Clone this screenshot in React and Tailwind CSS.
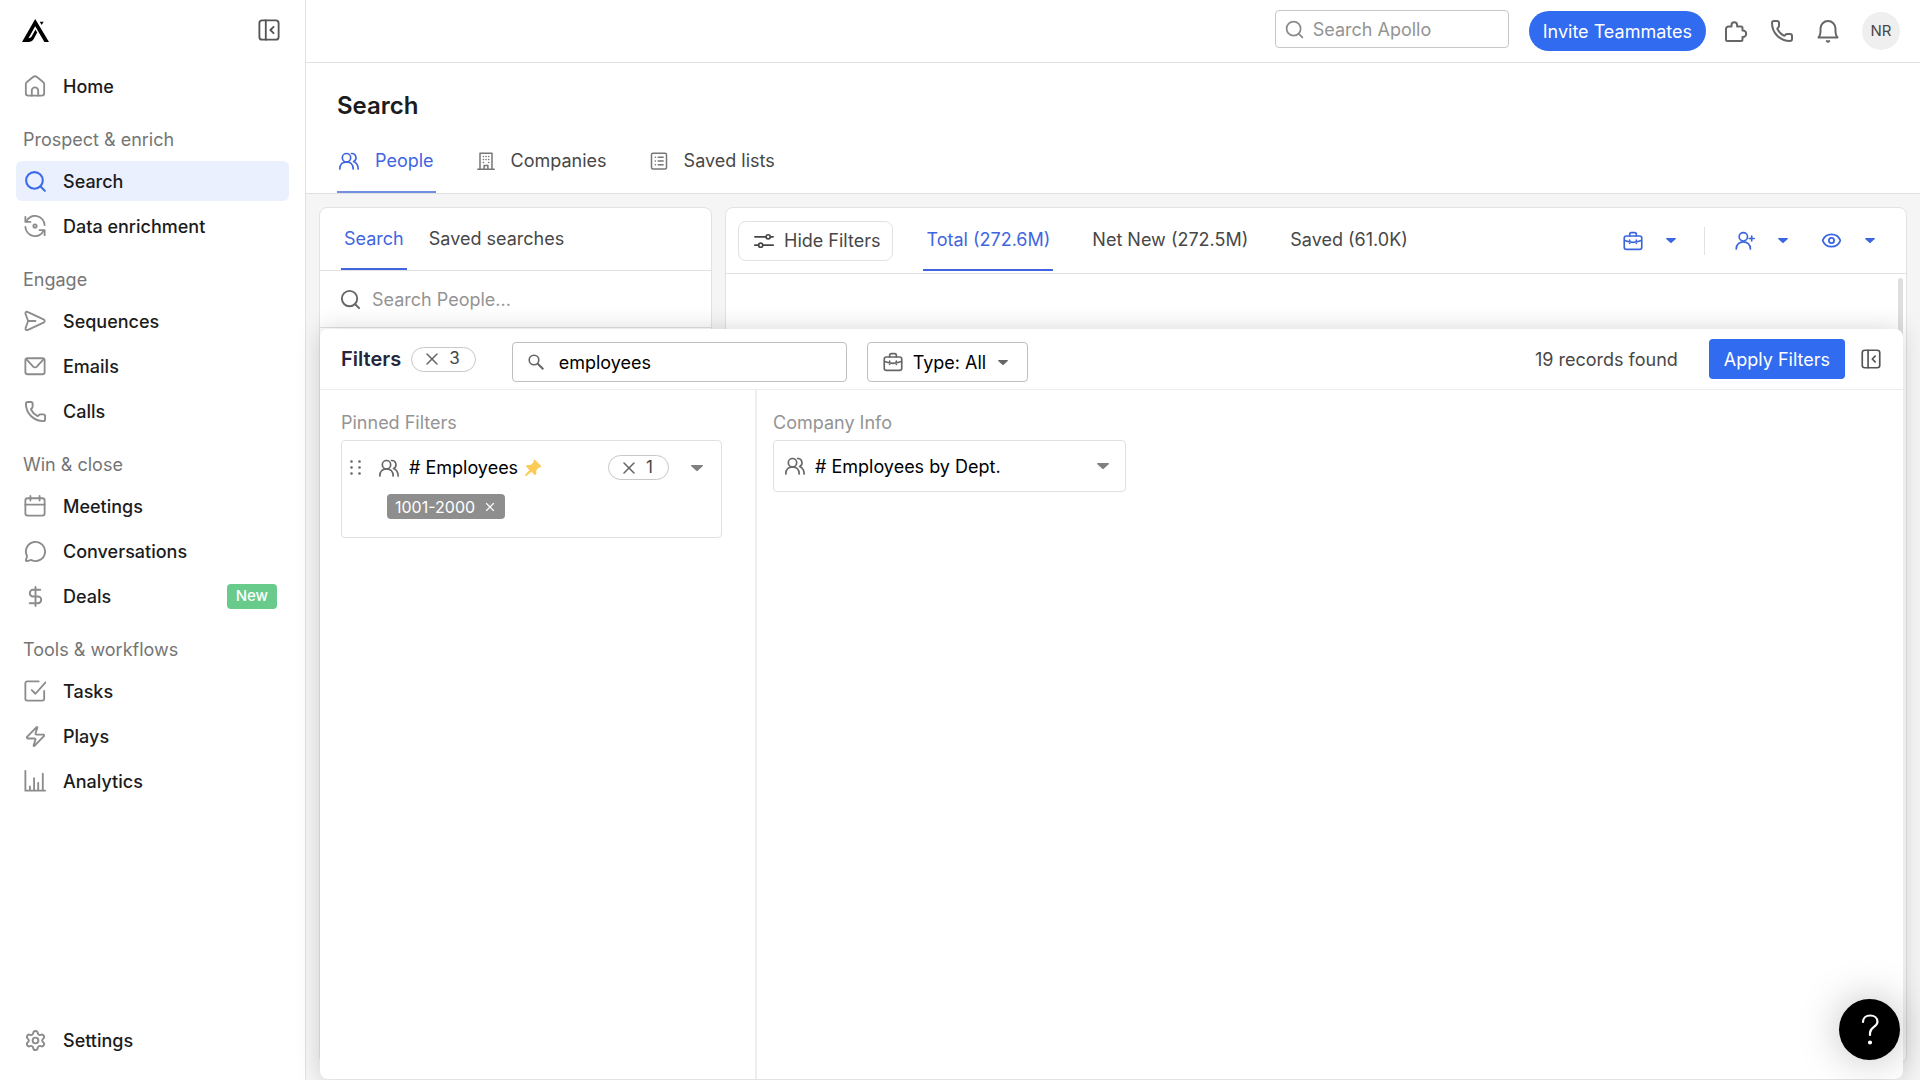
import React from "react";
import { Search, Phone, MessageCircle, DollarSign, Zap, Settings, Eye, X } from "lucide-react";

function Svg({ size = 22, sw = 2, className = "", children }) {
  return (
    <svg width={size} height={size} viewBox="0 0 24 24" fill="none" stroke="currentColor" strokeWidth={sw}
      strokeLinecap="round" strokeLinejoin="round" className={"shrink-0 " + className} aria-hidden="true">
      {children}
    </svg>
  );
}

const HomeIcon = () => (
  <Svg>
    <path d="M2 10c0-1 .4-1.800 1.200-2.400l7-5.600a3 3 0 0 1 3.600 0l7 5.600c.8.600 1.200 1.400 1.200 2.400v10a2.500 2.500 0 0 1-2.500 2.500h-15A2.500 2.500 0 0 1 2 20Z" />
    <path d="M8.500 22.500V17a3.500 3.500 0 0 1 7 0v5.500" />
  </Svg>
);
const EnrichIcon = () => (
  <Svg>
    <path d="M1.500 2v5.500H7" />
    <path d="M2.500 7A10.500 10.500 0 0 1 22.500 11" />
    <path d="M22.500 22v-5.500H17" />
    <path d="M21.500 17A10.500 10.500 0 0 1 1.500 13" />
    <circle cx="12" cy="12" r="1.800" />
  </Svg>
);
const SendIcon = () => (
  <Svg>
    <path d="M1.500 3.800c0-1.800 1.200-2.300 2.800-1.500l17 7.900c1.700.8 1.700 2.800 0 3.600l-17 7.900c-1.600.8-3.100-.3-2.600-1.900L4.500 12Z" />
    <path d="M4.500 12h8" />
  </Svg>
);
const CalendarIcon = () => (
  <Svg>
    <rect x="1.500" y="3.500" width="21" height="19" rx="2.500" />
    <path d="M1.500 10.500h21M7 1v5M17 1v5" />
  </Svg>
);
const MailIcon = () => (
  <Svg>
    <rect x="1.500" y="3.500" width="21" height="17.500" rx="2.500" />
    <path d="m2.500 4.500 7.500 8.200a2.700 2.700 0 0 0 4 0l7.500-8.200" />
  </Svg>
);
const TaskIcon = () => (
  <Svg>
    <path d="M22 12v8.500a2 2 0 0 1-2 2H3.500a2 2 0 0 1-2-2V3.500a2 2 0 0 1 2-2H16" />
    <path d="m8.500 11 4 4L23.500 2.500" />
  </Svg>
);
const ChartIcon = () => (
  <Svg>
    <path d="M1.500 1v21.500h21.500M6.500 18v4M11 9v13M15.500 14v8M20.500 4v18" />
  </Svg>
);
const PanelIcon = ({ size = 22 }) => (
  <Svg size={size}>
    <rect x="1.500" y="1.500" width="21" height="21" rx="3" />
    <path d="M8.500 1.500v21M17 8.500 13.500 12l3.500 3.500" />
  </Svg>
);
const PeopleIcon = ({ size = 20, className }) => (
  <Svg size={size} className={className}>
    <circle cx="9" cy="8" r="5" />
    <path d="M1 21.500c0-5.500 3.500-8.500 8-8.500s8 3 8 8.500" />
    <path d="M15 3a5 5 0 0 1 2.500 9.500c3.500 1.500 5.500 4.500 5.500 9" />
  </Svg>
);
const UserPlusIcon = () => (
  <Svg size={20}>
    <circle cx="10" cy="7" r="5" />
    <path d="M1.500 21.500c0-5.500 4-8.500 8.500-8.500s8.500 3 8.500 8.500M20 6v6M17 9h6" />
  </Svg>
);
const BuildingIcon = () => (
  <Svg size={18}>
    <path d="M1 23h22M4 23V1.500h16V23M9.500 23v-5h5v5M8.500 6h.2M12 6h.2M15.500 6h.2M8.500 10h.2M12 10h.2M15.500 10h.2M8.500 14h.2M15.500 14h.2" />
  </Svg>
);
const ListIcon = () => (
  <Svg size={18}>
    <rect x="2" y="1.500" width="20" height="21" rx="2" />
    <path d="M7 7h.2M11 7h6.500M7 12h.2M11 12h6.500M7 17h.2M11 17h6.500" />
  </Svg>
);
const SlidersIcon = () => (
  <Svg size={20}>
    <path d="M1 7h13M19.500 7H23M1 17h4.500M11 17h12" />
    <circle cx="17" cy="7" r="2.500" />
    <circle cx="8" cy="17" r="2.500" />
  </Svg>
);
const BriefcaseIcon = () => (
  <Svg size={20}>
    <rect x="1.500" y="6" width="21" height="16" rx="2.500" />
    <path d="M8 6V4a2 2 0 0 1 2-2h4a2 2 0 0 1 2 2v2M2 11.500c6 2.500 14 2.500 20 0M8 11v4M16 11v4" />
  </Svg>
);
const PuzzleIcon = () => (
  <Svg size={24}>
    <path d="M4.500 7.500h3V6a2.800 2.800 0 0 1 5.600 0v1.500H17a1.500 1.500 0 0 1 1.500 1.500v2.500h.5a3.200 3.200 0 0 1 0 6.400h-.5v2.600a1.500 1.500 0 0 1-1.500 1.500H3.500A1.500 1.500 0 0 1 2 20.500V10a2.500 2.500 0 0 1 2.500-2.500Z" />
  </Svg>
);
const BellIcon = () => (
  <Svg size={24}>
    <path d="M2.500 18.500h19c-1.300-1.500-2-3.200-2-5.500V9.500a7.500 7.500 0 0 0-15 0V13c0 2.300-.7 4-2 5.500Z" />
    <path d="m10.800 22 1.200.8 1.200-.8" />
  </Svg>
);
const FilterSearchIcon = () => (
  <svg width="16" height="16" viewBox="0 0 16 16" fill="none" stroke="currentColor" strokeWidth="1.600" className="shrink-0" aria-hidden="true">
    <circle cx="6" cy="6" r="4.800" />
    <path d="m9.500 9.500 5.800 5.800" strokeWidth="2" />
  </svg>
);
const PinIcon = () => (
  <svg width="18" height="18" viewBox="0 0 18 18" className="shrink-0" aria-hidden="true">
    <path fill="#fbcb55" d="m10.500.5 7 6.700-1.600 1.500-1-.2-2.700 3 .2 3.300-1.500 1.400-3.400-3.500L2 17.200l-1.200-1L5.500 11 1.800 7.300l1.500-1.400 3.300.2 3-2.800-.3-1.500Z" />
  </svg>
);
const Caret = ({ size = 12, className = "" }) => (
  <svg width={size} height={size / 2} viewBox="0 0 12 6" className={"shrink-0 " + className} aria-hidden="true">
    <path fill="currentColor" d="M.8 0h10.400c.7 0 1 .7.500 1.200L6.700 5.700a1 1 0 0 1-1.400 0L.3 1.200C-.2.700.1 0 .8 0Z" />
  </svg>
);
const Logo = () => (
  <svg width="27" height="23" viewBox="0 0 27 23" aria-hidden="true">
    <path d="M13.200 0 27 23h-4.600L13.200 7.200 6.500 19.300c1.800-.2 2.700-1 3.700-2.800l3.300-6 1.700 3-2.700 5C10.700 22 9.300 23 5.700 23H0Z" />
    <path d="M17.800 2.800h3.800l-1.900 3.300Z" />
  </svg>
);

const SearchNavIcon = () => <Search size={25} strokeWidth={2} className="shrink-0" />;
const PhoneNavIcon = () => <Phone size={23} strokeWidth={2} className="shrink-0" />;
const ChatNavIcon = () => <MessageCircle size={23} strokeWidth={2} className="shrink-0" />;

const groups = [
  ["Prospect & enrich", [["Search", SearchNavIcon], ["Data enrichment", EnrichIcon]]],
  ["Engage", [["Sequences", SendIcon], ["Emails", MailIcon], ["Calls", PhoneNavIcon]]],
  ["Win & close", [["Meetings", CalendarIcon], ["Conversations", ChatNavIcon], ["Deals", DollarSign]]],
  ["Tools & workflows", [["Tasks", TaskIcon], ["Plays", Zap], ["Analytics", ChartIcon]]],
];

function NavItem({ label, icon: Icon }) {
  const active = label === "Search";
  return (
    <a href="#" className={"flex h-10 items-center rounded-md pr-3 pl-[7px] text-[18px] font-medium text-[#1c1c1c] " + (active ? "bg-[#eaf0fe]" : "")}>
      <span className={"mr-4 flex w-6 justify-center " + (active ? "text-[#3b6be8]" : "text-[#8c8c8c]")}>
        <Icon size={23} strokeWidth={2} />
      </span>
      {label}
      {label === "Deals" && (
        <span className="ml-auto flex h-[25px] items-center rounded bg-[#69cb8b] px-[9px] text-[15px] font-medium text-white">New</span>
      )}
    </a>
  );
}

function Sidebar() {
  return (
    <nav className="flex w-[306px] shrink-0 flex-col border-r border-[#e2e2e2] bg-white px-4">
      <div className="flex h-[66px] items-center justify-between pr-[9px] pb-1.5">
        <a href="#" aria-label="Apollo" className="ml-1.5"><Logo /></a>
        <button aria-label="Collapse sidebar" className="text-[#555]"><PanelIcon /></button>
      </div>
      <NavItem label="Home" icon={HomeIcon} />
      {groups.map(([title, items]) => (
        <section key={title}>
          <h2 className="flex h-[55px] items-center pt-3 pl-[7px] text-[18px] text-[#757575]">{title}</h2>
          <div className="flex flex-col gap-[5px]">
            {items.map(([label, icon]) => <NavItem key={label} label={label} icon={icon} />)}
          </div>
        </section>
      ))}
      <div className="mt-auto mb-5"><NavItem label="Settings" icon={Settings} /></div>
    </nav>
  );
}

function TopBar() {
  return (
    <header className="flex h-[63px] shrink-0 items-center justify-end border-b border-[#e2e2e2] bg-white pr-5">
      <label className="mr-5 mb-1 flex h-[38px] w-[234px] items-center gap-2 rounded border border-[#c8c8c8] pl-2 text-[#8c8c8c]">
        <Search size={21} className="shrink-0" />
        <input aria-label="Search Apollo" placeholder="Search Apollo" className="w-full min-w-0 text-[18px] outline-none placeholder:text-[#949494]" />
      </label>
      <button className="mr-[18px] flex h-10 items-center rounded-full bg-[#316bf0] px-3.5 text-[18px] whitespace-nowrap text-white">Invite Teammates</button>
      <div className="flex items-center gap-[22px] text-[#666]">
        <button aria-label="Extensions"><PuzzleIcon /></button>
        <button aria-label="Dialer"><Phone size={24} /></button>
        <button aria-label="Notifications"><BellIcon /></button>
        <button className="flex size-[38px] items-center justify-center rounded-full bg-[#efefef] text-[15px] text-[#474747]">NR</button>
      </div>
    </header>
  );
}

function PageTab({ icon, label, active }) {
  return (
    <button className={"flex h-full items-center gap-4 border-b-2 px-0.5 text-[18px] " + (active ? "border-[#6f8fe0] text-[#3f66e0]" : "border-transparent text-[#474747]")}>
      <span className={active ? "" : "text-[#777]"}>{icon}</span>
      {label}
    </button>
  );
}

function PageHeader() {
  return (
    <div className="flex h-[131px] shrink-0 flex-col border-b border-[#e0e0e0] bg-white px-[31px]">
      <h1 className="pt-[27px] text-[24px] leading-8 font-semibold text-[#1c1c1c]">Search</h1>
      <div className="mt-2 flex flex-1 gap-[39px]">
        <PageTab active icon={<PeopleIcon />} label="People" />
        <PageTab icon={<BuildingIcon />} label="Companies" />
        <PageTab icon={<ListIcon />} label="Saved lists" />
      </div>
    </div>
  );
}

function SearchPanel() {
  return (
    <section className="w-[393px] shrink-0 rounded-lg border border-[#e2e2e2] bg-white">
      <div className="flex h-[63px] gap-[19px] border-b border-[#e2e2e2] pl-[21px] text-[18px]">
        <button className="border-b-2 border-[#3f66e0] px-[3px] text-[#3f66e0]">Search</button>
        <button className="border-b-2 border-transparent px-[3px] text-[#474747]">Saved searches</button>
      </div>
      <label className="flex h-[57px] items-center gap-2.5 border-b border-[#e2e2e2] pl-[19px] text-[#666]">
        <Search size={23} className="shrink-0" />
        <input aria-label="Search People" placeholder="Search People..." className="min-w-0 flex-1 text-[18px] outline-none placeholder:text-[#949494]" />
      </label>
    </section>
  );
}

function ResultsPanel() {
  const tabs = ["Total (272.6M)", "Net New (272.5M)", "Saved (61.0K)"];
  return (
    <section className="flex min-w-0 flex-1 flex-col rounded-lg border border-[#e2e2e2] bg-white">
      <div className="flex h-[66px] shrink-0 items-center border-b border-[#e2e2e2] pr-[30px] pl-3">
        <button className="flex h-10 items-center gap-2.5 rounded-lg border border-[#e2e2e2] pr-3 pl-[15px] text-[18px] text-[#474747]">
          <SlidersIcon />Hide Filters
        </button>
        <div className="ml-[30px] flex h-full gap-9 pb-0.5">
          {tabs.map((t, i) => (
            <button key={t} className={"border-b-2 px-[3px] pt-0.5 text-[18px] " + (i === 0 ? "border-[#3f66e0] text-[#3f66e0]" : "border-transparent text-[#474747]")}>{t}</button>
          ))}
        </div>
        <div className="ml-auto flex items-center text-[#3b66e0]">
          <button aria-label="Jobs"><BriefcaseIcon /></button>
          <button aria-label="Jobs menu" className="ml-[23px]"><Caret size={10} /></button>
          <span className="mr-[30px] ml-7 h-7 w-px bg-[#e2e2e2]" />
          <button aria-label="Add people"><UserPlusIcon /></button>
          <button aria-label="Add people menu" className="ml-[23px]"><Caret size={10} /></button>
          <button aria-label="View" className="ml-[33px]"><Eye size={21} /></button>
          <button aria-label="View menu" className="mr-px ml-[23px]"><Caret size={10} /></button>
        </div>
      </div>
      <div className="mt-1 mr-[3px] w-[5px] flex-1 self-end rounded-full bg-[#dedede]" />
    </section>
  );
}

function CountPill({ n }) {
  return (
    <button className="flex h-[25px] items-center gap-[7px] rounded-full border border-[#c8c8c8] pr-[15px] pl-2.5 text-[17px] text-[#474747]">
      <X size={20} strokeWidth={1.800} className="text-[#666]" />{n}
    </button>
  );
}

function FilterOverlay() {
  return (
    <section className="absolute top-[329px] right-[17px] bottom-px left-[320px] flex flex-col rounded-lg bg-white shadow-[0_0_24px_rgba(0,0,0,0.16)]">
      <div className="flex h-[61px] shrink-0 items-center border-b border-[#ececf0] pr-[22px] pl-[21px]">
        <h2 className="text-[20px] font-semibold text-[#24263d]">Filters</h2>
        <div className="ml-2.5"><CountPill n={3} /></div>
        <label className="mt-1.5 ml-9 flex h-10 w-[335px] items-center gap-[15px] rounded border border-[#bfbfbf] pl-[15px] text-[#666]">
          <FilterSearchIcon />
          <input aria-label="Search filters" defaultValue="employees" className="min-w-0 flex-1 text-[18px] text-black outline-none" />
        </label>
        <button className="mt-1.5 ml-5 flex h-10 items-center gap-2.5 rounded border border-[#bfbfbf] px-[15px] text-[18px] text-black">
          <span className="text-[#666]"><BriefcaseIcon /></span>Type: All<Caret size={10} className="mr-1 ml-0.5 text-[#666]" />
        </button>
        <span className="mr-[31px] ml-auto text-[18px] text-[#474747]">19 records found</span>
        <button className="mr-4 h-10 rounded bg-[#316bf0] px-[15px] text-[18px] text-white">Apply Filters</button>
        <button aria-label="Collapse filters" className="text-[#555]"><PanelIcon size={20} /></button>
      </div>
      <div className="flex flex-1">
        <div className="w-[437px] shrink-0 border-r-2 border-[#eceef2] pt-5 pr-[33px] pl-[21px]">
          <h3 className="mb-1 text-[18px] leading-[26px] text-[#949494]">Pinned Filters</h3>
          <div className="h-[98px] rounded border border-[#e0e0e0]">
            <div className="flex h-[53px] items-center pr-[18px] pl-2">
              <svg width="12" height="16" viewBox="0 0 12 16" fill="#666" className="mr-[17px]" aria-hidden="true">
                <circle cx="1.500" cy="1.500" r="1.300" /><circle cx="9.500" cy="1.500" r="1.300" />
                <circle cx="1.500" cy="7.500" r="1.300" /><circle cx="9.500" cy="7.500" r="1.300" />
                <circle cx="1.500" cy="13.500" r="1.300" /><circle cx="9.500" cy="13.500" r="1.300" />
              </svg>
              <PeopleIcon className="mr-2.5 text-[#666]" />
              <span className="mr-1.5 text-[18px] text-black"># Employees</span>
              <PinIcon />
              <div className="mr-[22px] ml-auto"><CountPill n={1} /></div>
              <button aria-label="Expand # Employees"><Caret className="text-[#808080]" /></button>
            </div>
            <button className="ml-[45px] flex h-[25px] items-center gap-2 rounded-sm bg-[#8e8e8e] px-2 text-[16px] text-white">
              1001-2000<X size={14} />
            </button>
          </div>
        </div>
        <div className="flex-1 pt-5 pl-4">
          <h3 className="mb-1 text-[18px] leading-[26px] text-[#949494]">Company Info</h3>
          <button className="flex h-[52px] w-[353px] items-center rounded border border-[#e0e0e0] pr-4 pl-[11px] text-[18px] text-black">
            <PeopleIcon className="mr-2.5 text-[#666]" /># Employees by Dept.
            <Caret className="ml-auto text-[#808080]" />
          </button>
        </div>
      </div>
    </section>
  );
}

export default function App() {
  return (
    <div className="relative flex h-screen overflow-hidden bg-[#f5f5f5] font-['Inter',sans-serif]">
      <Sidebar />
      <div className="flex min-w-0 flex-1 flex-col">
        <TopBar />
        <PageHeader />
        <main className="flex flex-1 gap-[13px] px-[13px] pt-[13px] pb-4">
          <SearchPanel />
          <ResultsPanel />
        </main>
      </div>
      <FilterOverlay />
      <button aria-label="Help" className="absolute right-5 bottom-5 flex size-[61px] items-center justify-center rounded-full bg-black text-white shadow-[0_0_40px_rgba(0,0,0,0.25)]">
        <svg width="20" height="32" viewBox="0 0 20 32" fill="none" stroke="currentColor" strokeWidth="2.200" strokeLinecap="round" aria-hidden="true">
          <path d="M3 8c0-4 3-6.500 7.200-6.500S17.500 4 17.500 7.800c0 5.200-7.500 5.200-7.500 11.200v2" />
          <circle cx="10" cy="28.500" r="1" fill="currentColor" />
        </svg>
      </button>
    </div>
  );
}
